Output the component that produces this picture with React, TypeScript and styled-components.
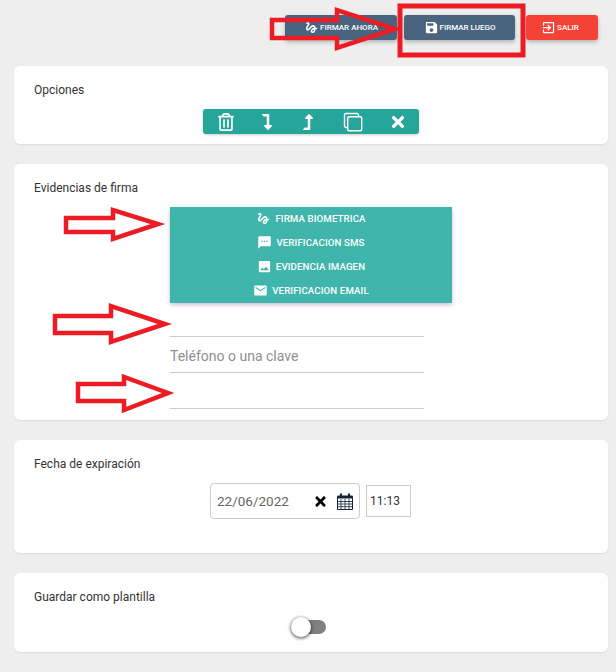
import React from 'react';
import styled, { createGlobalStyle } from 'styled-components';
import { FaLevelDownAlt, FaLevelUpAlt, FaRegTrashAlt, FaTimes } from 'react-icons/fa';
import { MdEmail, MdExitToApp, MdGesture, MdImage, MdSave, MdSms } from 'react-icons/md';

const GlobalStyle = createGlobalStyle`
  html, body {
    margin: 0;
    padding: 0;
    background: #eeeeee;
    font-family: Roboto, "Liberation Sans", sans-serif;
  }
`;

const Page = styled.div`
  position: relative;
  width: 616px;
  height: 672px;
  overflow: hidden;
  background: #eeeeee;
  box-sizing: border-box;
  padding: 15px 8px 0 14px;
`;

const TopBar = styled.div`
  display: flex;
  justify-content: flex-end;
  height: 25px;
  padding-right: 10px;
  margin-bottom: 26px;
`;

const ActionButton = styled.button<{ $bg: string; $width: number; $gap: number; $right?: number }>`
  width: ${p => p.$width}px;
  height: 25px;
  margin-left: ${p => p.$gap}px;
  padding: 0 ${p => p.$right ?? 0}px 0 0;
  border: none;
  border-radius: 3px;
  background: ${p => p.$bg};
  color: #fff;
  font: 500 8px Roboto, sans-serif;
  display: flex;
  align-items: center;
  justify-content: center;
  gap: 1px;
  box-shadow: 0 2px 4px rgba(0, 0, 0, 0.25);
  svg {
    font-size: 15px;
  }
`;

const Card = styled.section<{ $height: number }>`
  height: ${p => p.$height}px;
  box-sizing: border-box;
  margin-bottom: 20px;
  padding: 17px 20px 0;
  background: #fff;
  border-radius: 6px;
  box-shadow: 0 1px 2px rgba(0, 0, 0, 0.08);
`;

const CardTitle = styled.h2`
  margin: 0;
  font-size: 12px;
  line-height: 14px;
  font-weight: 400;
  color: #333;
`;

const Centered = styled.div<{ $top: number }>`
  display: flex;
  justify-content: center;
  margin-top: ${p => p.$top}px;
`;

const ToolGroup = styled.div`
  display: flex;
  width: 216px;
  height: 25px;
  margin-left: -1px;
  border-radius: 3px;
  background: #26a69a;
  box-shadow: 0 1px 3px rgba(0, 0, 0, 0.2);
`;

const ToolButton = styled.button<{ $size: number; $left?: number; $right?: number }>`
  flex: 1 1 0;
  border: none;
  padding: 0 ${p => p.$right ?? 0}px 0 ${p => p.$left ?? 0}px;
  background: transparent;
  color: #fff;
  display: flex;
  align-items: center;
  justify-content: center;
  font-size: ${p => p.$size}px;
`;

const Evidence = styled.div`
  width: 282px;
  margin: 12px 0 0 136px;
`;

const MethodList = styled.div`
  background: #40b5ab;
  box-shadow: 0 2px 4px rgba(90, 40, 130, 0.3);
`;

const Method = styled.div`
  height: 24px;
  padding-bottom: 2px;
  box-sizing: border-box;
  display: flex;
  align-items: center;
  justify-content: center;
  gap: 4px;
  color: #fff;
  font-size: 9.7px;
  font-weight: 500;
  letter-spacing: 0.1px;
  svg {
    font-size: 15px;
  }
`;

const Field = styled.div<{ $height?: number }>`
  width: 254px;
  height: ${p => p.$height ?? 36}px;
  box-sizing: border-box;
  border-bottom: 1px solid #cccccc;
  color: #8f8f8f;
  font-size: 14px;
  line-height: 39px;
`;

const DateRow = styled.div`
  display: flex;
  align-items: center;
  gap: 6px;
  margin: 12px 0 0 176px;
`;

const DateBox = styled.div`
  width: 150px;
  height: 36px;
  box-sizing: border-box;
  padding: 0 6px;
  border: 1px solid #cccccc;
  border-radius: 4px;
  display: flex;
  align-items: center;
  color: #666;
  font-size: 13.5px;
`;

const DateText = styled.span`
  flex: 1;
`;

const ClearIcon = styled(FaTimes)`
  color: #000;
  font-size: 15px;
  margin-right: 9px;
`;

const TimeBox = styled.div`
  width: 45px;
  height: 32px;
  box-sizing: border-box;
  padding-left: 3px;
  border: 1px solid #cccccc;
  display: flex;
  align-items: center;
  color: #333;
  font-size: 12px;
`;

const ToggleTrack = styled.div`
  position: relative;
  width: 25px;
  height: 14px;
  border-radius: 7px;
  background: #808080;
  margin-left: 5px;
`;

const ToggleKnob = styled.div`
  position: absolute;
  left: -10px;
  top: -3px;
  width: 20px;
  height: 20px;
  border-radius: 50%;
  background: #fff;
  box-shadow: 0 1px 3px 1px rgba(0, 0, 0, 0.45);
`;

const Annotations = styled.svg`
  position: absolute;
  left: 0;
  top: 0;
  pointer-events: none;
`;

const CopyIcon = () => (
  <svg width="20" height="20" viewBox="0 0 20 20" fill="none" stroke="#fff" strokeWidth="1.4">
    <path d="M4.5 15.5H3A1.5 1.5 0 0 1 1.5 14V3A1.5 1.5 0 0 1 3 1.5h11A1.5 1.5 0 0 1 15.5 3v1.5" />
    <rect x="4.7" y="4.7" width="14" height="14" rx="1.5" />
  </svg>
);

const CalendarIcon = () => (
  <svg width="16" height="17" viewBox="0 0 16 17" style={{ flex: 'none' }}>
    <path d="M.5 3.5h15v13H.5z" fill="none" stroke="#14213d" />
    <path d="M.5 2.5h15v3H.5z" fill="#14213d" />
    <path d="M4 .5v4M12 .5v4" stroke="#14213d" strokeWidth="2" />
    <path d="M.5 8.5h15M.5 11h15M.5 13.7h15M4 6v10M8 6v10M12 6v10" stroke="#14213d" strokeWidth=".8" fill="none" />
  </svg>
);

const arrows = [
  '272,20 337,20 337,10 395,29 337,48 337,38 272,38',
  '66,218 113,218 113,210 158,224 113,239 113,232 66,232',
  '55,316 111,316 111,306 165,324 111,342 111,333 55,333',
  '78,384 124,384 124,377 168,393 124,410 124,401 78,401',
];

export default function App() {
  return (
    <Page>
      <GlobalStyle />
      <TopBar>
        <ActionButton $bg="#48647f" $width={112} $gap={0}><MdGesture />FIRMAR AHORA</ActionButton>
        <ActionButton $bg="#48647f" $width={111} $gap={7}><MdSave />FIRMAR LUEGO</ActionButton>
        <ActionButton $bg="#f44336" $width={72} $gap={11} $right={4}><MdExitToApp />SALIR</ActionButton>
      </TopBar>

      <Card $height={78}>
        <CardTitle>Opciones</CardTitle>
        <Centered $top={12}>
          <ToolGroup>
            <ToolButton $size={18} $left={3}><FaRegTrashAlt /></ToolButton>
            <ToolButton $size={16}><FaLevelDownAlt /></ToolButton>
            <ToolButton $size={16} $right={4}><FaLevelUpAlt /></ToolButton>
            <ToolButton $size={20} $right={2}><CopyIcon /></ToolButton>
            <ToolButton $size={18} $left={2}><FaTimes /></ToolButton>
          </ToolGroup>
        </Centered>
      </Card>

      <Card $height={256}>
        <CardTitle>Evidencias de firma</CardTitle>
        <Evidence>
          <MethodList>
            <Method><MdGesture />FIRMA BIOMETRICA</Method>
            <Method><MdSms />VERIFICACION SMS</Method>
            <Method><MdImage />EVIDENCIA IMAGEN</Method>
            <Method><MdEmail />VERIFICACION EMAIL</Method>
          </MethodList>
          <Field $height={34} />
          <Field>Teléfono o una clave</Field>
          <Field />
        </Evidence>
      </Card>

      <Card $height={113}>
        <CardTitle>Fecha de expiración</CardTitle>
        <DateRow>
          <DateBox>
            <DateText>22/06/2022</DateText>
            <ClearIcon />
            <CalendarIcon />
          </DateBox>
          <TimeBox>11:13</TimeBox>
        </DateRow>
      </Card>

      <Card $height={79}>
        <CardTitle>Guardar como plantilla</CardTitle>
        <Centered $top={16}>
          <ToggleTrack><ToggleKnob /></ToggleTrack>
        </Centered>
      </Card>

      <Annotations width="616" height="672">
        {arrows.map(points => (
          <polygon key={points} points={points} fill="none" stroke="#ed1c24" strokeWidth="4.5" />
        ))}
        <rect x="400" y="6" width="123" height="49" fill="none" stroke="#ed1c24" strokeWidth="5" />
      </Annotations>
    </Page>
  );
}
